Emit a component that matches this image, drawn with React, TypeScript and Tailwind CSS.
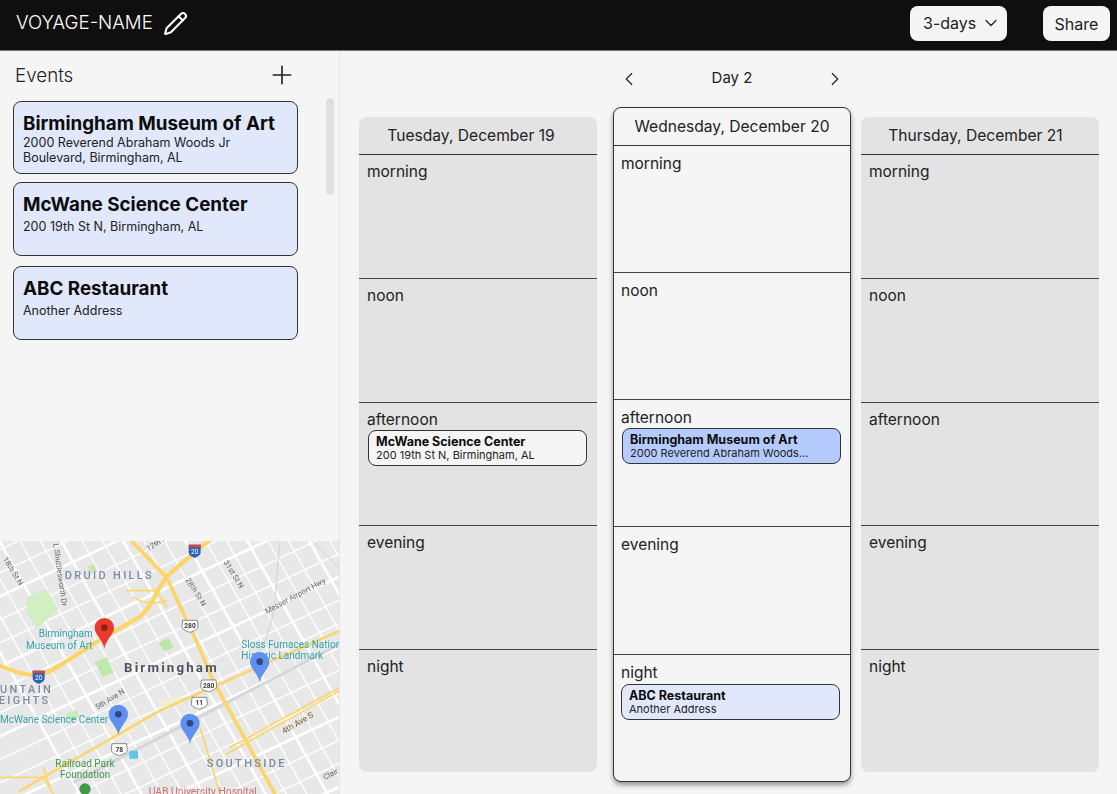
import { ChevronDown, ChevronLeft, ChevronRight, Pencil, Plus } from "lucide-react";

type Slot = { name: string; card?: { title: string; address: string; tone: string } };

const plain: Slot[] = [
  { name: "morning" },
  { name: "noon" },
  { name: "afternoon" },
  { name: "evening" },
  { name: "night" },
];

const tuesday: Slot[] = [
  { name: "morning" },
  { name: "noon" },
  { name: "afternoon", card: { title: "McWane Science Center", address: "200 19th St N, Birmingham, AL", tone: "bg-[#f5f5f5] ml-[1px] mr-[10px] -mt-[2px]" } },
  { name: "evening" },
  { name: "night" },
];

const wednesday: Slot[] = [
  { name: "morning" },
  { name: "noon" },
  { name: "afternoon", card: { title: "Birmingham Museum of Art", address: "2000 Reverend Abraham Woods...", tone: "bg-[#b5cbfd] ml-[1px] mr-[9px] -mt-[2px]" } },
  { name: "evening" },
  { name: "night", card: { title: "ABC Restaurant", address: "Another Address", tone: "bg-[#e1e8fb] mr-[10px] -mt-[1px]" } },
];

const sideHeights = ["h-[123px]", "h-[124px]", "h-[123px]", "h-[124px]", "h-[123px]"];
const activeHeights = ["h-[126px]", "h-[127px]", "h-[127px]", "h-[128px]", "h-[127px]"];

function EventCard({ title, lines, className, addressClass }: { title: string; lines: string[]; className: string; addressClass: string }) {
  return (
    <div className={`w-[285px] rounded-lg border border-[#333] bg-[#e1e8fb] px-[9px] pt-[10px] ${className}`}>
      <div className="text-[18.8px] font-bold leading-[24px] text-[#0c0c0c]">{title}</div>
      <div className={addressClass}>
        {lines.map((l) => (
          <div key={l} className="text-[12.5px] leading-[15px] text-[#222]">{l}</div>
        ))}
      </div>
    </div>
  );
}

function DayColumn({ date, slots, active, headerClass }: { date: string; slots: Slot[]; active?: boolean; headerClass?: string }) {
  const heights = active ? activeHeights : sideHeights;
  return (
    <div
      className={`w-[238px] shrink-0 rounded-lg ${
        active
          ? "border border-[#333] bg-[#f5f5f5] shadow-[0_3px_5px_rgba(0,0,0,0.4)]"
          : "mt-[10px] bg-[#e3e3e3]"
      }`}
    >
      <div className={`flex h-[38px] items-center justify-center border-b border-[#333] text-[15.6px] text-[#222] ${headerClass ?? ""}`}>
        {date}
      </div>
      {slots.map((s, i) => (
        <div
          key={s.name}
          className={`${heights[i]} ${active ? "pl-[7px] pt-[6px]" : "pl-2 pt-[5px]"} ${i > 0 ? "border-t border-[#444]" : ""}`}
        >
          <div className="text-[15.5px] leading-[24px] text-[#222]">{s.name}</div>
          {s.card && (
            <div className={`h-[36px] rounded-lg border border-[#333] px-[7px] pt-[3px] ${s.card.tone}`}>
              <div className="text-[12.5px] font-bold leading-[15px] text-[#0c0c0c]">{s.card.title}</div>
              <div className="text-[11px] leading-[12px] text-[#222]">{s.card.address}</div>
            </div>
          )}
        </div>
      ))}
    </div>
  );
}

function Pin({ x, y, color, dot }: { x: number; y: number; color: string; dot: string }) {
  return (
    <g transform={`translate(${x} ${y})`}>
      <path d="M0 90C-6 62-29 48-29 28a29 29 0 0 1 58 0C29 48 6 62 0 90Z" fill={color} />
      <circle cx="0" cy="28" r="10" fill={dot} />
    </g>
  );
}

function MapView() {
  const along = Array.from({ length: 22 }, (_, i) => i * 70 - 300);
  const across = Array.from({ length: 24 }, (_, i) => i * 62 - 200);
  const label = { fontFamily: "Roboto, sans-serif" };
  return (
    <div className="h-[253px] w-[339px] shrink-0 overflow-hidden">
      <svg viewBox="0 21 1020 759" className="block h-[253px] w-[340px] blur-[0.4px]" style={label}>
        <rect x="0" y="0" width="1020" height="800" fill="#e8e8e8" />
        {along.map((v, i) => (
          <line key={`a${v}`} x1="-50" y1={v + 300} x2="1100" y2={v - 240} stroke="#fff" strokeWidth={i % 3 === 0 ? 8 : 4} />
        ))}
        {across.map((v, i) => (
          <line key={`b${v}`} x1={v} y1="0" x2={v + 450} y2="800" stroke="#fff" strokeWidth={i % 3 === 0 ? 8 : 4} />
        ))}
        <path d="M80 190l60-25 35 60-65 60-30-50Z" fill="#d2efc4" />
        <path d="M262 98l20-8 8 20-18 6Z" fill="#c6e8b0" />
        <path d="M476 325l30-14 14 30-28 12Z" fill="#bfe6a8" />
        <path d="M285 385l35-15 22 45-34 15Z" fill="#c0e8ad" />
        <path d="M195 540l35-14 10 25-30 12Z" fill="#cdeabb" />
        <path d="M470 500l70-20 12 30-60 20Z" fill="#f3ecd8" />
        <path d="M320 590l70-30 20 30-70 30Z" fill="#f3ecd8" />
        <path d="M220 745L1020 330" stroke="#d5d6da" strokeWidth="9" fill="none" />
        <path d="M840 21c-15 120-5 230-60 330" stroke="#d2d3d6" strokeWidth="3" fill="none" />
        <path d="M940 21l80 85" stroke="#a9d0ee" strokeWidth="2" fill="none" />
        <g fill="none" stroke="#fbd56a" strokeLinecap="round">
          <path d="M0 395c60 25 110 45 170 5L300 318l120-70c40-30 50-90 90-130L625 21" strokeWidth="13" />
          <path d="M395 21l105 110 85 180 55 130 185 339" strokeWidth="11" />
          <path d="M60 770l420-240 540-240" strokeWidth="7" />
          <path d="M680 660l340-190M690 640l330-180" strokeWidth="5" />
          <path d="M0 730h130l30 50M130 700l20 60" strokeWidth="5" />
          <path d="M600 580l60 200" strokeWidth="5" />
          <path d="M380 170h90l30 50M400 190c30 20 70 20 100 10" strokeWidth="5" />
        </g>
        <g fontSize="33" fontWeight="500" fill="#7b8aa6" letterSpacing="7">
          <text x="194" y="136">DRUID HILLS</text>
          <text x="0" y="476">UNTAIN</text>
          <text x="-4" y="511">EIGHTS</text>
          <text x="620" y="698">SOUTHSIDE</text>
        </g>
        <text x="372" y="415" fontSize="40" fontWeight="700" fill="#4f5560" letterSpacing="6.5">Birmingham</text>
        <g fontSize="30" fill="#36a3a8">
          <text x="116" y="310">Birmingham</text>
          <text x="78" y="344">Museum of Art</text>
          <text x="0" y="566">McWane Science Center</text>
          <text x="724" y="341">Sloss Furnaces Nation</text>
          <text x="724" y="375">Historic Landmark</text>
        </g>
        <g fontSize="30" fill="#3f9a45">
          <text x="166" y="699">Railroad Park</text>
          <text x="180" y="733">Foundation</text>
        </g>
        <text x="446" y="782" fontSize="31" fill="#c9736e">UAB University Hospital</text>
        <g fontSize="23" fill="#666">
          <text transform="translate(445 52) rotate(-32)">12th A</text>
          <text transform="translate(8 75) rotate(58)">18th St N</text>
          <text transform="translate(160 30) rotate(82)">L Shuttlesworth Dr</text>
          <text transform="translate(556 138) rotate(58)">28th St N</text>
          <text transform="translate(670 85) rotate(58)">31st St N</text>
          <text transform="translate(800 240) rotate(-28)">Messer Airport Hwy</text>
          <text transform="translate(292 528) rotate(-32)">5th Ave N</text>
          <text transform="translate(975 738) rotate(-28)">Clair</text>
        </g>
        <text transform="translate(852 600) rotate(-30)" fontSize="25" fill="#7a5a26">4th Ave S</text>
        {[[584, 50, "20"], [116, 428, "20"]].map(([x, y, n]) => (
          <g key={`${x}`} transform={`translate(${x} ${y})`}>
            <path d="M-18-18h36v22c0 10-10 14-18 18-8-4-18-8-18-18Z" fill="#2f62b5" />
            <rect x="-18" y="-18" width="36" height="8" fill="#d0473d" />
            <text x="0" y="10" textAnchor="middle" fontSize="20" fill="#fff">{n}</text>
          </g>
        ))}
        {[[570, 276, "280"], [626, 455, "280"], [598, 507, "11"], [358, 646, "78"]].map(([x, y, n]) => (
          <g key={`${x}`} transform={`translate(${x} ${y})`}>
            <path d="M-22-17h44l2 18c0 10-12 14-24 18-12-4-24-8-24-18Z" fill="#fff" stroke="#555" strokeWidth="2" />
            <text x="0" y="7" textAnchor="middle" fontSize="20" fontWeight="700" fill="#333">{n}</text>
          </g>
        ))}
        <rect x="388" y="650" width="26" height="24" rx="3" fill="#5fc4ea" />
        <circle cx="255" cy="765" r="17" fill="#3f9a45" />
        <Pin x={313} y={253} color="#ea3a2e" dot="#8d2019" />
        <Pin x={355} y={513} color="#5e91f2" dot="#31487f" />
        <Pin x={570} y={540} color="#5e91f2" dot="#31487f" />
        <Pin x={779} y={355} color="#5e91f2" dot="#31487f" />
      </svg>
    </div>
  );
}

export default function App() {
  return (
    <div className="flex h-[794px] w-[1117px] flex-col overflow-hidden bg-[#f5f5f5] font-['Inter',sans-serif]">
      <header className="flex h-[51px] shrink-0 items-center border-b border-[#777] bg-[#0f0f0f] pb-[3px] pl-4 pr-[7px]">
        <span className="text-[18.7px] font-light text-white">VOYAGE-NAME</span>
        <Pencil className="ml-[10px] text-white" size={25} strokeWidth={2} />
        <div className="ml-auto flex h-[35px] w-[97px] items-center gap-[5px] rounded-lg bg-[#f5f5f5] pb-[1px] pl-[13px] text-[16px] text-[#222]">
          3-days
          <ChevronDown size={20} strokeWidth={1.5} />
        </div>
        <div className="ml-[36px] flex h-[35px] w-[67px] items-center justify-center rounded-lg bg-[#f5f5f5] pt-[1px] text-[16px] text-[#222]">
          Share
        </div>
      </header>

      <div className="flex min-h-0 flex-1">
        <aside className="relative flex w-[340px] shrink-0 flex-col border-r border-[#e2e5ee]">
          <div className="flex h-[50px] shrink-0 items-center justify-between pl-[15px] pr-[42px]">
            <span className="text-[18.8px] font-light text-[#222]">Events</span>
            <Plus size={30} strokeWidth={1.3} className="-mt-[2px] text-[#222]" />
          </div>
          <div className="flex flex-1 flex-col pl-[13px]">
            <EventCard className="h-[73px]" addressClass="-mt-[1px]" title="Birmingham Museum of Art" lines={["2000 Reverend Abraham Woods Jr", "Boulevard, Birmingham, AL"]} />
            <EventCard className="mt-[8px] h-[74px]" addressClass="mt-[2px]" title="McWane Science Center" lines={["200 19th St N, Birmingham, AL"]} />
            <EventCard className="mt-[10px] h-[74px]" addressClass="mt-[2px]" title="ABC Restaurant" lines={["Another Address"]} />
          </div>
          <div className="absolute left-[326px] top-[47px] h-[97px] w-2 rounded bg-[#e0e0e0]" />
          <MapView />
        </aside>

        <main className="min-w-0 flex-1 pl-[19px]">
          <div className="ml-[254px] flex h-[56px] w-[238px] items-center justify-between px-[5px] pb-[1px] text-[#222]">
            <ChevronLeft size={22} strokeWidth={1.3} />
            <span className="text-[15px]">Day 2</span>
            <ChevronRight size={22} strokeWidth={1.3} />
          </div>
          <div className="flex items-start">
            <DayColumn date="Tuesday, December 19" slots={tuesday} headerClass="pr-[14px]" />
            <div className="ml-4">
              <DayColumn date="Wednesday, December 20" slots={wednesday} active />
            </div>
            <div className="ml-[10px]">
              <DayColumn date="Thursday, December 21" slots={plain} headerClass="pr-[9px]" />
            </div>
          </div>
        </main>
      </div>
    </div>
  );
}
